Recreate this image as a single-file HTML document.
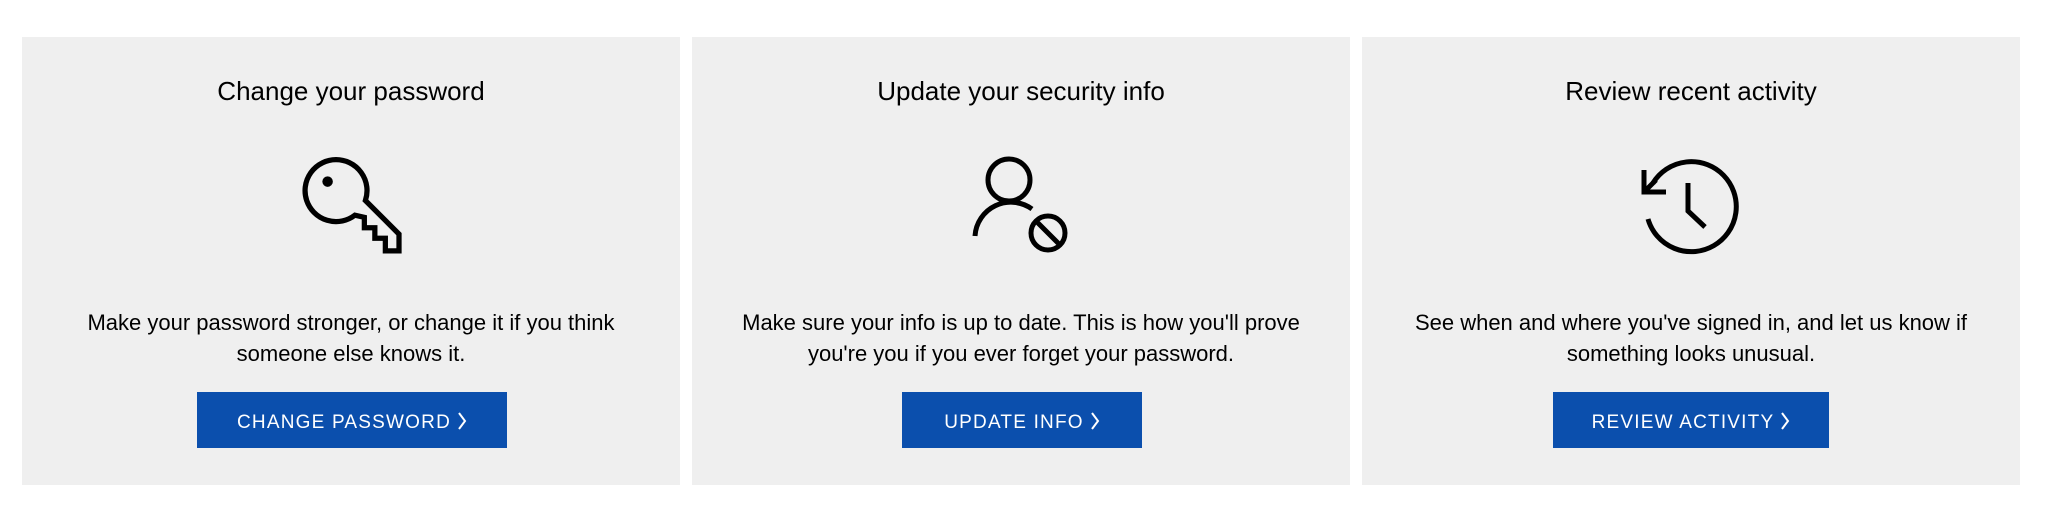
<!DOCTYPE html>
<html><head><meta charset="utf-8"><style>
html,body{margin:0;padding:0;background:#fff;width:2048px;height:520px;overflow:hidden;font-family:"Liberation Sans",sans-serif;color:#000}
.p{position:absolute;top:37px;width:658px;height:448px;background:#efefef;text-align:center}
.t{position:absolute;top:37px;left:0;right:0;font-size:26px;line-height:34px}
.d{position:absolute;top:270px;left:0;right:0;font-size:22px;line-height:31px}
.b{position:absolute;top:355px;height:56px;background:#0b4fad;color:#fff;font-size:19px;letter-spacing:1.2px;line-height:62px;white-space:nowrap}
.b i{display:inline-block;width:10px;height:18px;margin-left:6px;vertical-align:-2px}
svg{position:absolute;left:0;top:0;overflow:visible}
</style></head><body>
<div class="p" style="left:22px">
<div class="t">Change your password</div>
<div class="d">Make your password stronger, or change it if you think<br>someone else knows it.</div>
<div class="b" style="left:175px;width:310px">CHANGE PASSWORD<i><svg width="10" height="18" style="position:static" fill="none" stroke="#fff" stroke-width="2"><path d="M2 1 L8 9 L2 17"/></svg></i></div>
</div>
<div class="p" style="left:692px">
<div class="t">Update your security info</div>
<div class="d">Make sure your info is up to date. This is how you'll prove<br>you're you if you ever forget your password.</div>
<div class="b" style="left:210px;width:240px">UPDATE INFO<i><svg width="10" height="18" style="position:static" fill="none" stroke="#fff" stroke-width="2"><path d="M2 1 L8 9 L2 17"/></svg></i></div>
</div>
<div class="p" style="left:1362px">
<div class="t">Review recent activity</div>
<div class="d">See when and where you've signed in, and let us know if<br>something looks unusual.</div>
<div class="b" style="left:191px;width:276px">REVIEW ACTIVITY<i><svg width="10" height="18" style="position:static" fill="none" stroke="#fff" stroke-width="2"><path d="M2 1 L8 9 L2 17"/></svg></i></div>
</div>
<svg width="2048" height="520" fill="none" stroke="#000" stroke-width="5">
<g transform="translate(336 190) scale(1.05) translate(-336 -190)">
<path d="M354 214 A29.5 29.5 0 1 1 364 200 L396 232 L396 248 L383 248 L383 236 L373 236 L373 226 L363 226 L363 216 Z" stroke-linejoin="miter"/>
<circle cx="328" cy="182" r="5" fill="#000" stroke="none"/>
</g>
<circle cx="1009" cy="180" r="21"/>
<path d="M975 236 A36 36 0 0 1 1032 209"/>
<circle cx="1048" cy="233" r="17"/>
<path d="M1036 221 L1060 245"/>
<path d="M1648 219 A45 45 0 1 0 1653 183"/>
<path d="M1644 170 L1644 192 L1666 192" stroke-width="5"/>
<path d="M1644 192 L1656 180"/>
<path d="M1688 183 L1688 211 L1705 227"/>
</svg>
</body></html>
